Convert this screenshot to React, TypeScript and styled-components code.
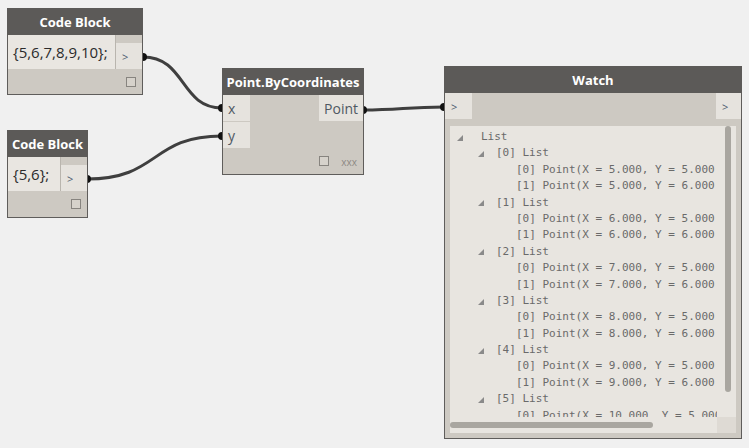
import * as React from "react";
import styled, { createGlobalStyle } from "styled-components";

const GlobalStyle = createGlobalStyle`
  html, body {
    margin: 0;
    padding: 0;
    background: #f0f0f0;
  }
`;

const Canvas = styled.div`
  position: relative;
  width: 749px;
  height: 448px;
  background: #f0f0f0;
  overflow: hidden;
  font-family: "Open Sans", "Noto Sans", sans-serif;
`;

const Wires = styled.svg`
  position: absolute;
  left: 0;
  top: 0;
  z-index: 0;
`;

const Node = styled.div<{ $x: number; $y: number; $w: number; $h: number }>`
  position: absolute;
  z-index: 1;
  left: ${(p) => p.$x}px;
  top: ${(p) => p.$y}px;
  width: ${(p) => p.$w}px;
  height: ${(p) => p.$h}px;
  box-sizing: border-box;
  display: flex;
  flex-direction: column;
  background: #cdc9c2;
  border: 1px solid #5f5d5b;
  border-top: none;
`;

const Header = styled.div`
  height: 27px;
  flex: none;
  display: flex;
  align-items: center;
  justify-content: center;
  margin: 0 -1px;
  background: #5c5a58;
  color: #ffffff;
  font-size: 13px;
  font-weight: 700;
  white-space: nowrap;
`;

const CodeRow = styled.div`
  height: 34px;
  flex: none;
  display: flex;
`;

const CodeText = styled.div`
  flex: 1;
  display: flex;
  align-items: center;
  padding-left: 5px;
  background: #e9e6e1;
  border-right: 1px solid #b9b5ae;
  color: #2b2b2b;
  font-size: 15px;
  white-space: nowrap;
`;

const OutColumn = styled.div`
  width: 26px;
  display: flex;
  flex-direction: column;
  padding-top: 8px;
`;

const PortCell = styled.div<{ $w?: number; $right?: boolean }>`
  height: 26px;
  width: ${(p) => (p.$w ? `${p.$w}px` : "auto")};
  display: flex;
  align-items: center;
  justify-content: ${(p) => (p.$right ? "flex-end" : "flex-start")};
  padding: 0 5px;
  box-sizing: border-box;
  background: #e6e3de;
  color: #4f5863;
  font-size: 14px;
`;

const Arrow = styled.span`
  font-size: 11px;
  color: #4a5a6e;
  padding-left: 1px;
`;

const Footer = styled.div`
  flex: 1;
  display: flex;
  align-items: center;
  justify-content: flex-end;
  gap: 12px;
  padding-right: 6px;
`;

const Box = styled.div`
  width: 8px;
  height: 8px;
  border: 1px solid #87847f;
  background: #d6d2cb;
`;

const Lacing = styled.span`
  font-size: 10px;
  color: #8d8a85;
  padding-top: 1px;
`;

const Ports = styled.div`
  display: flex;
  justify-content: space-between;
`;

const PortStack = styled.div`
  display: flex;
  flex-direction: column;
  gap: 1px;
`;

const WatchPorts = styled.div`
  height: 26px;
  flex: none;
  display: flex;
  justify-content: space-between;
`;

const ListPanel = styled.div`
  flex: 1;
  margin: 7px 5px 5px 5px;
  display: grid;
  grid-template-columns: 1fr 19px;
  grid-template-rows: 1fr 16px;
  background: #e8e5e0;
  overflow: hidden;
`;

const ListContent = styled.div`
  padding-top: 3px;
  overflow: hidden;
  font-family: "DejaVu Sans Mono", "Liberation Mono", monospace;
  font-size: 11px;
  color: #6a6a6a;
`;

const TreeRow = styled.div<{ $indent: number }>`
  height: 16.4px;
  line-height: 16.4px;
  display: flex;
  align-items: center;
  padding-left: ${(p) => p.$indent}px;
  white-space: pre;
`;

const Toggle = styled.span<{ $w: number }>`
  width: ${(p) => p.$w}px;
  flex: none;
  display: flex;
  align-items: center;
  &::before {
    content: "";
    width: 0;
    height: 0;
    border-left: 6px solid transparent;
    border-bottom: 6px solid #8a8a8a;
    margin-top: 1px;
  }
`;

const VTrack = styled.div`
  display: flex;
  justify-content: center;
`;

const VThumb = styled.div`
  width: 6px;
  height: 266px;
  margin-left: 2px;
  border-radius: 3px;
  background: #a9a6a0;
`;

const HTrack = styled.div`
  display: flex;
  align-items: center;
`;

const HThumb = styled.div`
  width: 203px;
  height: 6px;
  border-radius: 3px;
  background: #a9a6a0;
`;

const Corner = styled.div`
  background: #dedad4;
`;

type Line = { level: number; text: string };

// the watch panel only shows the start of each point, the rest is scrolled off
const lines: Line[] = [{ level: 0, text: "List" }];
[5, 6, 7, 8, 9, 10].forEach((x, i) => {
  lines.push({ level: 1, text: `[${i}] List` });
  [5, 6].forEach((y, j) => {
    lines.push({
      level: 2,
      text: `[${j}] Point(X = ${x.toFixed(3)}, Y = ${y.toFixed(3)}`,
    });
  });
});
// last row is below the fold anyway
const visible = lines.slice(0, lines.length - 1);

const levels = [
  { indent: 7, toggle: 24 },
  { indent: 28, toggle: 18 },
  { indent: 66, toggle: 0 },
];

function Wire({ d }: { d: string }) {
  return <path d={d} fill="none" stroke="#3f3f3f" strokeWidth={3} />;
}

function CodeBlock({ x, y, w, h, code }: { x: number; y: number; w: number; h: number; code: string }) {
  return (
    <Node $x={x} $y={y} $w={w} $h={h}>
      <Header>Code Block</Header>
      <CodeRow>
        <CodeText>{code}</CodeText>
        <OutColumn>
          <PortCell>
            <Arrow>&gt;</Arrow>
          </PortCell>
        </OutColumn>
      </CodeRow>
      <Footer>
        <Box />
      </Footer>
    </Node>
  );
}

export default function App() {
  return (
    <Canvas>
      <GlobalStyle />
      <Wires width={749} height={448}>
        <Wire d="M143,57 C186,57 180,108 222,108" />
        <Wire d="M87,179 C160,179 150,136 222,136" />
        <Wire d="M363,110 C400,110 406,107 444,107" />
        {[
          [143, 57],
          [222, 108],
          [87, 179],
          [222, 136],
          [363, 110],
          [444, 107],
        ].map(([cx, cy], i) => (
          <circle key={i} cx={cx} cy={cy} r={4} fill="#111" />
        ))}
      </Wires>

      <CodeBlock x={7} y={8} w={136} h={87} code="{5,6,7,8,9,10};" />
      <CodeBlock x={7} y={130} w={81} h={88} code="{5,6};" />

      <Node $x={222} $y={68} $w={142} $h={107}>
        <Header>Point.ByCoordinates</Header>
        <Ports>
          <PortStack>
            <PortCell $w={27}>x</PortCell>
            <PortCell $w={27}>y</PortCell>
          </PortStack>
          <PortStack>
            <PortCell $right>Point</PortCell>
          </PortStack>
        </Ports>
        <Footer>
          <Box />
          <Lacing>xxx</Lacing>
        </Footer>
      </Node>

      <Node $x={444} $y={66} $w={298} $h={373}>
        <Header>Watch</Header>
        <WatchPorts>
          <PortCell $w={27}>
            <Arrow>&gt;</Arrow>
          </PortCell>
          <PortCell $w={25}>
            <Arrow>&gt;</Arrow>
          </PortCell>
        </WatchPorts>
        <ListPanel>
          <ListContent>
            {visible.map((l, i) => (
              <TreeRow key={i} $indent={levels[l.level].indent}>
                {levels[l.level].toggle > 0 && <Toggle $w={levels[l.level].toggle} />}
                {l.text}
              </TreeRow>
            ))}
          </ListContent>
          <VTrack>
            <VThumb />
          </VTrack>
          <HTrack>
            <HThumb />
          </HTrack>
          <Corner />
        </ListPanel>
      </Node>
    </Canvas>
  );
}
